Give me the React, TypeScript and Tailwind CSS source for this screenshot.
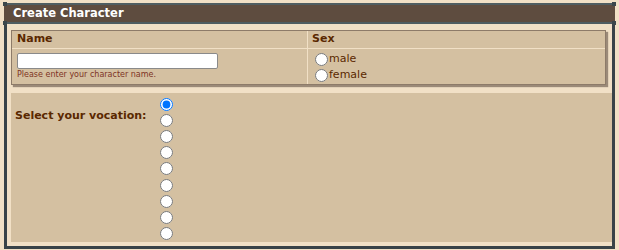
import React from 'react';

const vocations = ['none', 'sorcerer', 'druid', 'paladin', 'knight', 'monk', 'master sorcerer', 'elder druid', 'royal paladin'];

export default function App() {
  return (
    <div className="w-[619px] h-[250px] bg-[#f1e0c6] pt-[3px] px-[4px] text-[#5a2800] font-['DejaVu_Sans',Verdana,sans-serif]">
      {/* caption bar */}
      <div className="relative h-[21px] bg-[#5e4c3f] border-y-2 border-[#4f5d61] flex items-center pl-[9px]">
        <span className="text-white font-bold text-[11.5px] leading-none">Create Character</span>
        <span className="absolute -left-[1px] -top-[3px] w-[4px] h-[4px] bg-[#3b474b]" />
        <span className="absolute -left-[1px] -bottom-[3px] w-[4px] h-[4px] bg-[#3b474b]" />
        <span className="absolute -right-[1px] -top-[3px] w-[4px] h-[4px] bg-[#3b474b]" />
        <span className="absolute -right-[1px] -bottom-[3px] w-[4px] h-[4px] bg-[#3b474b]" />
      </div>

      {/* content */}
      <div className="h-[225px] border-x-[3px] border-b-[3px] border-[#394348] px-[4px] pt-[6px]">
        <div className="border border-[#8d7b69] shadow-[2px_2px_1px_#9b8a78] bg-[#d4c0a1] mr-[2px]">
          <div className="grid grid-cols-[296px_1fr] text-[11px]">
            <div className="h-[18px] px-[5px] flex items-center font-bold border-b border-r border-[#f1e0c6]">Name</div>
            <div className="h-[18px] px-[4px] flex items-center font-bold border-b border-[#f1e0c6]">Sex</div>
            <div className="h-[35px] px-[5px] pt-[4px] border-r border-[#f1e0c6]">
              <input type="text" className="block w-[201px] h-[16px] bg-white border border-[#8a8a8a] rounded-[2px]" />
              <div className="text-[8px] leading-[12px] text-[#7e3424]">Please enter your character name.</div>
            </div>
            <div className="h-[35px] px-[7px] pt-[2px] text-[11px] leading-[16px]">
              <label className="flex items-center h-[16px]">
                <input type="radio" name="sex" className="w-[13px] h-[13px] m-0 mr-[1px]" />male
              </label>
              <label className="flex items-center h-[16px]">
                <input type="radio" name="sex" className="w-[13px] h-[13px] m-0 mr-[1px]" />female
              </label>
            </div>
          </div>
        </div>

        <div className="mt-[8px] -mr-[4px] h-[149px] bg-[#d4c0a1] flex">
          <div className="w-[149px] pl-[4px] pt-[15px] text-[11px] font-bold">Select your vocation:</div>
          <div className="pt-[3px] flex flex-col">
            {vocations.map((v, i) => (
              <div key={v} className="h-[16.3px] flex items-center">
                <input type="radio" name="vocation" defaultChecked={i === 0} className="w-[13px] h-[13px] m-0" />
              </div>
            ))}
          </div>
        </div>
      </div>
    </div>
  );
}
